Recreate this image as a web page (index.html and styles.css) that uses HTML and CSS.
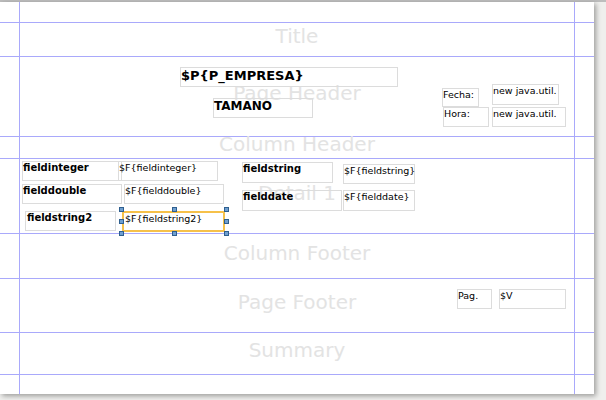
FILE: index.html
```html
<!DOCTYPE html>
<html>
<head>
<meta charset="utf-8">
<link rel="stylesheet" href="styles.css">
</head>
<body>
<div class="viewport">
  <div class="page">
    <div class="band margin-top"></div>
    <div class="band band-title"><span class="band-label">Title</span></div>
    <div class="band band-pheader">
      <span class="band-label">Page Header</span>
      <div class="el bold big e-empresa">$P{P_EMPRESA}</div>
      <div class="el bold mid e-tamano">TAMANO</div>
      <div class="el e-fecha">Fecha:</div>
      <div class="el e-java1">new java.util.</div>
      <div class="el e-hora">Hora:</div>
      <div class="el e-java2">new java.util.</div>
    </div>
    <div class="band band-cheader"><span class="band-label">Column Header</span></div>
    <div class="band band-detail">
      <span class="band-label">Detail 1</span>
      <div class="el bold e-l-int">fieldinteger</div>
      <div class="el e-f-int">$F{fieldinteger}</div>
      <div class="el bold e-l-dbl">fielddouble</div>
      <div class="el e-f-dbl">$F{fielddouble}</div>
      <div class="el bold e-l-str2">fieldstring2</div>
      <div class="el selected e-f-str2">$F{fieldstring2}</div>
      <div class="el bold e-l-str">fieldstring</div>
      <div class="el e-f-str">$F{fieldstring}</div>
      <div class="el bold e-l-date">fielddate</div>
      <div class="el e-f-date">$F{fielddate}</div>
      <span class="handle h-tl"></span>
      <span class="handle h-tm"></span>
      <span class="handle h-tr"></span>
      <span class="handle h-ml"></span>
      <span class="handle h-mr"></span>
      <span class="handle h-bl"></span>
      <span class="handle h-bm"></span>
      <span class="handle h-br"></span>
    </div>
    <div class="band band-cfooter"><span class="band-label">Column Footer</span></div>
    <div class="band band-pfooter">
      <span class="band-label">Page Footer</span>
      <div class="el e-pag">Pag.</div>
      <div class="el e-v">$V</div>
    </div>
    <div class="band band-summary"><span class="band-label">Summary</span></div>
    <div class="band margin-bottom"></div>
    <div class="guide guide-left"></div>
    <div class="guide guide-right"></div>
  </div>
</div>
</body>
</html>
```
FILE: styles.css
```css
html, body {
  margin: 0;
  padding: 0;
}
body {
  background: #efefed;
  font-family: "DejaVu Sans", sans-serif;
  width: 606px;
  height: 400px;
  overflow: hidden;
}
.viewport {
  border-top: 2px solid #bdbdbd;
  height: 398px;
}
.page {
  position: relative;
  width: 594px;
  height: 392px;
  background: #ffffff;
  box-shadow: 2px 2px 5px rgba(0, 0, 0, 0.35);
  display: flex;
  flex-direction: column;
}
.band {
  position: relative;
  border-bottom: 1px solid #a9a9fb;
  display: flex;
  align-items: center;
  justify-content: center;
  padding-bottom: 7px;
  box-sizing: border-box;
  flex: none;
}
.margin-top { height: 21px; }
.band-title { height: 34px; }
.band-pheader { height: 80px; }
.band-cheader { height: 22px; }
.band-detail { height: 75px; }
.band-cfooter { height: 45px; }
.band-pfooter { height: 54px; }
.band-summary { height: 42px; }
.margin-bottom { height: 19px; border-bottom: none; }

.band-label {
  font-size: 20px;
  color: #e3e3e3;
  line-height: 1;
  white-space: nowrap;
  position: relative;
  left: 0;
}
.band-title .band-label,
.band-pheader .band-label,
.band-cheader .band-label,
.band-detail .band-label,
.band-cfooter .band-label,
.band-pfooter .band-label,
.band-summary .band-label {
  margin-left: 0;
}

.guide {
  position: absolute;
  top: 0;
  bottom: 0;
  width: 1px;
  background: #a9a9fb;
}
.guide-left { left: 19px; }
.guide-right { left: 574px; }

.el {
  position: absolute;
  box-sizing: border-box;
  border: 1px solid #dcdcdc;
  font-size: 9.5px;
  line-height: 12px;
  padding: 0 0 0 0;
  color: #000;
  white-space: nowrap;
  overflow: visible;
  z-index: 2;
}
.bold { font-weight: bold; font-size: 10px; }
.big { font-size: 13px; line-height: 15px; }
.mid { font-size: 12px; line-height: 14px; }

.e-empresa { left: 180px; top: 10px; width: 218px; height: 20px; }
.e-tamano { left: 213px; top: 41px; width: 100px; height: 20px; }
.e-fecha { left: 442px; top: 31px; width: 37px; height: 19px; }
.e-java1 { left: 492px; top: 27px; width: 67px; height: 21px; }
.e-hora { left: 443px; top: 50px; width: 46px; height: 20px; }
.e-java2 { left: 492px; top: 50px; width: 74px; height: 20px; }

.e-l-int { left: 22px; top: 2px; width: 100px; height: 20px; }
.e-f-int { left: 118px; top: 2px; width: 100px; height: 20px; }
.e-l-dbl { left: 22px; top: 25px; width: 100px; height: 20px; }
.e-f-dbl { left: 124px; top: 25px; width: 100px; height: 20px; }
.e-l-str2 { left: 25px; top: 52px; width: 91px; height: 20px; padding-left: 1px; }
.e-f-str2 { left: 122px; top: 52px; width: 103px; height: 21px; }
.e-l-str { left: 242px; top: 3px; width: 91px; height: 21px; }
.e-f-str { left: 343px; top: 5px; width: 72px; height: 20px; }
.e-l-date { left: 242px; top: 31px; width: 100px; height: 21px; }
.e-f-date { left: 343px; top: 31px; width: 72px; height: 21px; }

.selected {
  border: 2px solid #f6c14a;
  padding-left: 1px;
}

.e-pag { left: 457px; top: 10px; width: 35px; height: 20px; }
.e-v { left: 499px; top: 10px; width: 67px; height: 20px; }

.handle {
  position: absolute;
  width: 5px;
  height: 5px;
  box-sizing: border-box;
  border: 1px solid #2f5f8f;
  background: #6f9fd0;
  z-index: 3;
}
.h-tl { left: 119px; top: 48px; }
.h-tm { left: 172px; top: 48px; }
.h-tr { left: 224px; top: 48px; }
.h-ml { left: 119px; top: 60px; }
.h-mr { left: 224px; top: 60px; }
.h-bl { left: 119px; top: 72px; }
.h-bm { left: 172px; top: 72px; }
.h-br { left: 224px; top: 72px; }
```
